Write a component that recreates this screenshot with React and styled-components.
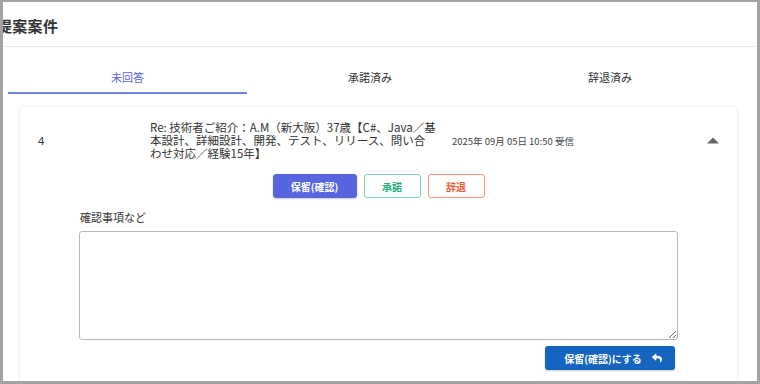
import React from 'react';
import styled, { createGlobalStyle } from 'styled-components';
import { FaReply } from 'react-icons/fa';

const GlobalStyle = createGlobalStyle`
  html, body {
    margin: 0;
    padding: 0;
    background: #ffffff;
  }
  body {
    font-family: "Noto Sans", "Noto Sans CJK JP", sans-serif;
    color: #333;
  }
`;

const Frame = styled.div`
  width: 760px;
  height: 384px;
  box-sizing: border-box;
  border-style: solid;
  border-color: #a3a3a3;
  border-width: 2px 3px 3px 3px;
  overflow: hidden;
  background: #fff;
`;

const Header = styled.div`
  height: 45px;
  display: flex;
  align-items: center;
  padding-top: 2px;
  box-sizing: border-box;
  border-bottom: 1px solid #ececec;
`;

const Title = styled.h1`
  margin: 0 0 0 -6px;
  font-size: 15px;
  font-weight: 700;
  color: #333;
  letter-spacing: 0.3px;
`;

const Tabs = styled.div`
  display: flex;
  padding: 0 0 0 5px;
  height: 47px;
`;

const Tab = styled.div`
  width: ${({ $w }) => $w}px;
  display: flex;
  align-items: center;
  justify-content: center;
  font-size: 11px;
  padding-top: 15px;
  box-sizing: border-box;
  color: ${({ $active }) => ($active ? '#5868d8' : '#333')};
  border-bottom: 2px solid ${({ $active }) => ($active ? '#7282e4' : 'transparent')};
`;

const Body = styled.div`
  padding: 13px 20px 0 17px;
`;

const Card = styled.div`
  background: #fff;
  border-radius: 3px;
  box-shadow: 0 0 3px rgba(0, 0, 0, 0.12), 0 1px 2px rgba(0, 0, 0, 0.06);
  padding: 14px 0 60px;
`;

const Row = styled.div`
  display: grid;
  grid-template-columns: 112px 282px 1fr 30px;
  align-items: center;
  padding-left: 18px;
`;

const Num = styled.div`
  font-size: 11px;
  color: #333;
`;

const Subject = styled.div`
  font-size: 11.5px;
  line-height: 13px;
  color: #333;
  white-space: nowrap;
  font-family: "Noto Sans CJK JP", sans-serif;
`;

const Received = styled.div`
  font-size: 9.5px;
  color: #444;
  padding-left: 20px;
  font-family: "Noto Sans CJK JP", sans-serif;
`;

const Caret = styled.div`
  display: flex;
  color: #666;
`;

const Actions = styled.div`
  display: flex;
  justify-content: center;
  gap: 7px;
  margin-top: 14px;
`;

const ActionButton = styled.button`
  height: 24px;
  min-width: ${({ $w }) => $w}px;
  border-radius: 3px;
  font-family: "Noto Sans CJK JP", sans-serif;
  font-size: 10px;
  font-weight: 700;
  border: 1px solid ${({ $border }) => $border};
  background: ${({ $bg }) => $bg};
  color: ${({ $color }) => $color};
  box-shadow: ${({ $filled }) => ($filled ? '0 1px 2px rgba(0,0,0,0.2)' : 'none')};
  padding: 0;
`;

const Form = styled.div`
  padding: 0 59px;
  margin-top: 11px;
`;

const Label = styled.div`
  font-size: 11px;
  color: #333;
  margin-left: 1px;
  font-family: "Noto Sans CJK JP", sans-serif;
`;

const Memo = styled.textarea`
  display: block;
  width: 100%;
  height: 109px;
  box-sizing: border-box;
  margin-top: 6px;
  border: 1px solid #b8b8b8;
  border-radius: 3px;
  resize: vertical;
`;

const SubmitRow = styled.div`
  display: flex;
  justify-content: flex-end;
  padding-right: 3px;
  margin-top: 6px;
`;

const Submit = styled.button`
  width: 130px;
  height: 24px;
  display: flex;
  align-items: center;
  justify-content: center;
  gap: 10px;
  background: #1565c0;
  color: #fff;
  border: none;
  border-radius: 3px;
  font-family: "Noto Sans CJK JP", sans-serif;
  font-size: 10px;
  font-weight: 700;
  padding: 0 0 0 6px;
  box-shadow: 0 1px 2px rgba(0, 0, 0, 0.2);
`;

const App = () => {
  return (
    <>
      <GlobalStyle />
      <Frame>
        <Header>
          <Title>提案案件</Title>
        </Header>
        <Tabs>
          <Tab $w={239} $active>未回答</Tab>
          <Tab $w={246}>承諾済み</Tab>
          <Tab $w={234}>辞退済み</Tab>
        </Tabs>
        <Body>
          <Card>
            <Row>
              <Num>4</Num>
              <Subject>
                Re: 技術者ご紹介：A.M（新大阪）37歳【C#、Java／基
                <br />
                本設計、詳細設計、開発、テスト、リリース、問い合
                <br />
                わせ対応／経験15年】
              </Subject>
              <Received>2025年 09月 05日 10:50 受信</Received>
              <Caret>
                <svg width="12" height="7" viewBox="0 0 12 7">
                  <path d="M0 6.5 L6 0.5 L12 6.5 Z" fill="#666" />
                </svg>
              </Caret>
            </Row>
            <Actions>
              <ActionButton $w={84} $filled $bg="#5865e0" $border="#5865e0" $color="#fff">
                保留(確認)
              </ActionButton>
              <ActionButton $w={57} $bg="#fff" $border="#7fd6b7" $color="#23b07e">
                承諾
              </ActionButton>
              <ActionButton $w={57} $bg="#fff" $border="#f2957f" $color="#ef5b3c">
                辞退
              </ActionButton>
            </Actions>
            <Form>
              <Label>確認事項など</Label>
              <Memo />
              <SubmitRow>
                <Submit>
                  保留(確認)にする
                  <FaReply size={10} />
                </Submit>
              </SubmitRow>
            </Form>
          </Card>
        </Body>
      </Frame>
    </>
  );
};

export default App;
